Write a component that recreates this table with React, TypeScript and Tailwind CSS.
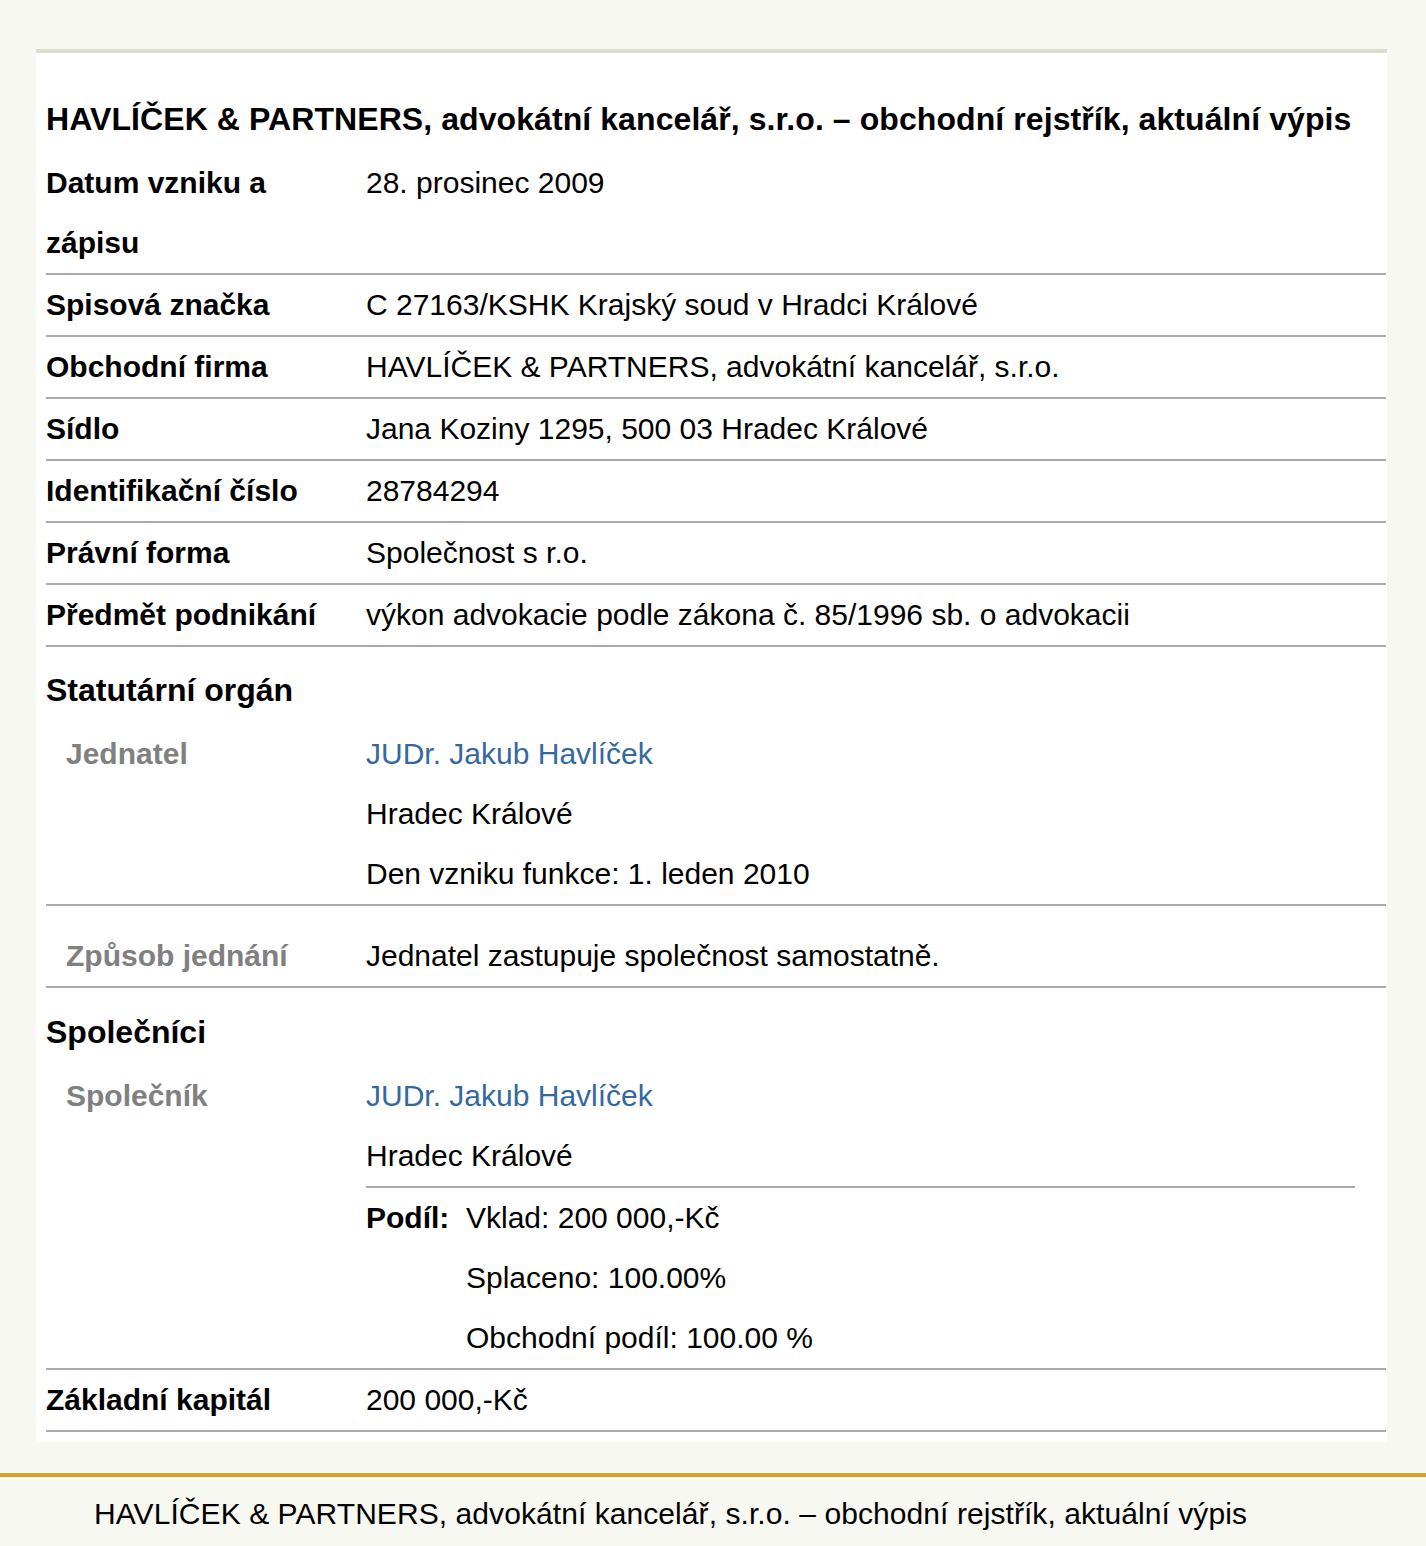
import React from "react";

const font = { fontFamily: '"Liberation Sans", Arial, sans-serif' };

function Row({ label, children }: { label: React.ReactNode; children: React.ReactNode }) {
  return (
    <div className="grid grid-cols-[320px_1fr] border-b-2 border-[#aaaaaa] leading-[60px] text-[30px]">
      <div className="font-bold text-black">{label}</div>
      <div className="text-black">{children}</div>
    </div>
  );
}

export default function App() {
  return (
    <div style={font} className="min-h-screen bg-[#f8f8f3] pt-[49px] text-black">
      <div className="ml-[36px] mr-[39px] bg-white border-t-4 border-[#dcdccf] pl-[10px] pr-[1px] pb-[10px]">
        <h1 className="pt-[46px] mb-[14px] text-[32px] leading-[40px] font-bold tracking-[0.08px]">
          HAVLÍČEK &amp; PARTNERS, advokátní kancelář, s.r.o. – obchodní rejstřík, aktuální výpis
        </h1>
        <Row label={<>Datum vzniku a<br />zápisu</>}>28. prosinec 2009</Row>
        <Row label="Spisová značka">C 27163/KSHK Krajský soud v Hradci Králové</Row>
        <Row label="Obchodní firma">HAVLÍČEK &amp; PARTNERS, advokátní kancelář, s.r.o.</Row>
        <Row label="Sídlo">Jana Koziny 1295, 500 03 Hradec Králové</Row>
        <Row label="Identifikační číslo">28784294</Row>
        <Row label="Právní forma">Společnost s r.o.</Row>
        <Row label="Předmět podnikání">výkon advokacie podle zákona č. 85/1996 sb. o advokacii</Row>

        <div className="pt-[13px] pb-[3px] text-[32px] leading-[60px] font-bold">Statutární orgán</div>
        <div className="grid grid-cols-[320px_1fr] border-b-2 border-[#aaaaaa] pt-px leading-[60px] text-[30px]">
          <div className="pl-[20px] font-bold text-[#808080]">Jednatel</div>
          <div>
            <div className="text-[#34699f]">JUDr. Jakub Havlíček</div>
            <div>Hradec Králové</div>
            <div>Den vzniku funkce: 1. leden 2010</div>
          </div>
        </div>
        <div className="grid grid-cols-[320px_1fr] border-b-2 border-[#aaaaaa] pt-[20px] leading-[60px] text-[30px]">
          <div className="pl-[20px] font-bold text-[#808080]">Způsob jednání</div>
          <div>Jednatel zastupuje společnost samostatně.</div>
        </div>

        <div className="pt-[14px] pb-[4px] text-[32px] leading-[60px] font-bold">Společníci</div>
        <div className="grid grid-cols-[320px_1fr] border-b-2 border-[#aaaaaa] leading-[60px] text-[30px]">
          <div className="pl-[20px] font-bold text-[#808080]">Společník</div>
          <div>
            <div className="text-[#34699f]">JUDr. Jakub Havlíček</div>
            <div>Hradec Králové</div>
            <div className="mr-[31px] border-t-2 border-[#aaaaaa] grid grid-cols-[100px_1fr]">
              <div className="font-bold">Podíl:</div>
              <div>
                <div>Vklad: 200 000,-Kč</div>
                <div>Splaceno: 100.00%</div>
                <div>Obchodní podíl: 100.00 %</div>
              </div>
            </div>
          </div>
        </div>
        <Row label="Základní kapitál">200 000,-Kč</Row>
      </div>

      <div className="mt-[31px] border-t-4 border-[#d9a326] pl-[94px] pt-[17px] pb-[12px] text-[30px] leading-[40px] tracking-[0.07px]">
        HAVLÍČEK &amp; PARTNERS, advokátní kancelář, s.r.o. – obchodní rejstřík, aktuální výpis
      </div>
    </div>
  );
}
